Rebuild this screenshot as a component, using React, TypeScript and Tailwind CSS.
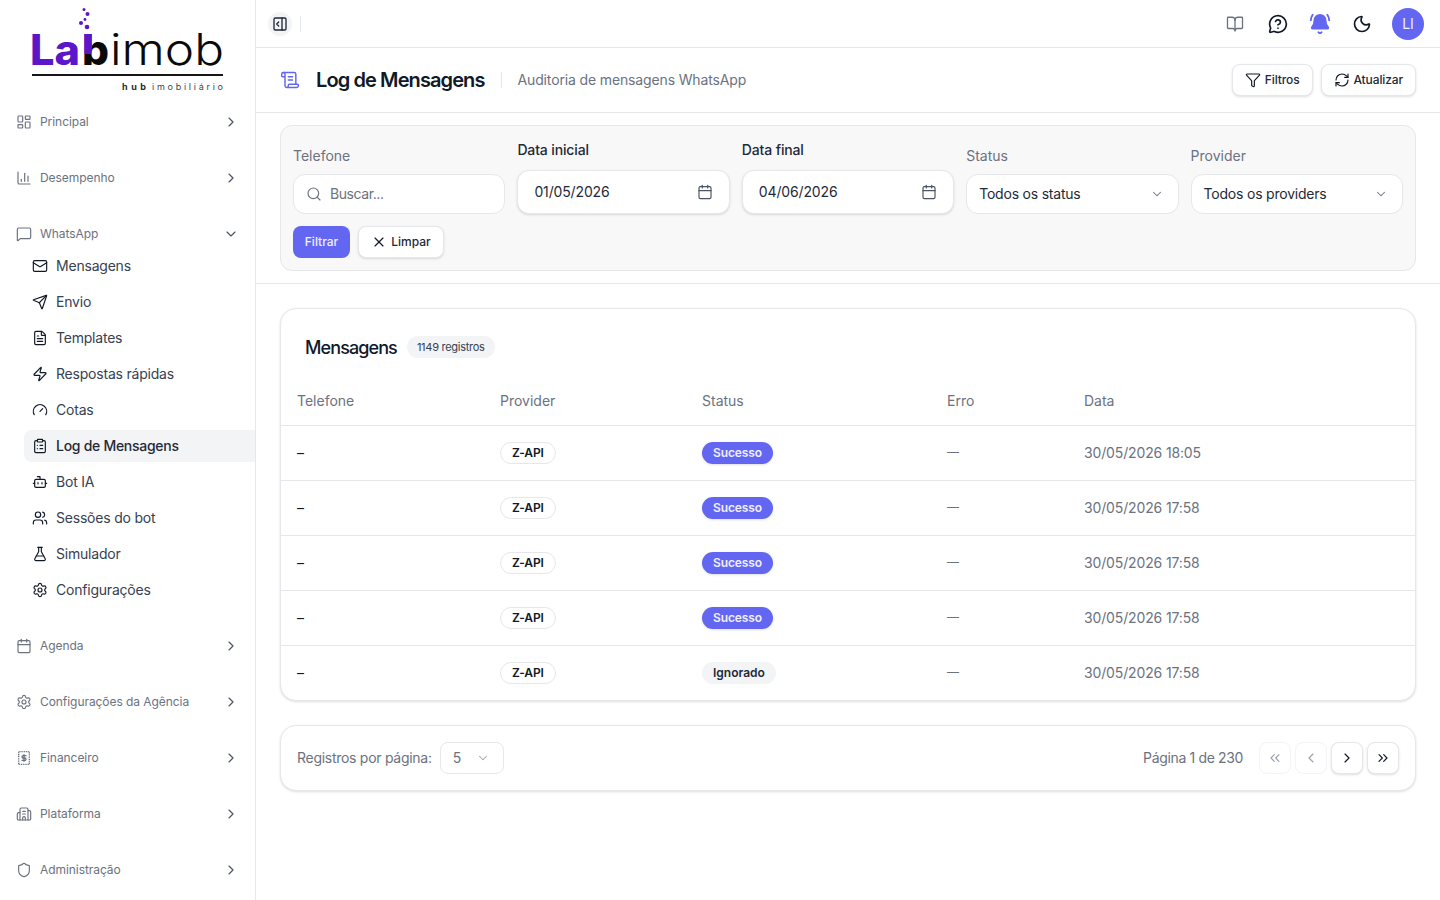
import {
  BellRing,
  BookOpen,
  Bot,
  Building2,
  Calendar,
  ChartColumn,
  ChevronDown,
  ChevronLeft,
  ChevronRight,
  ChevronsLeft,
  ChevronsRight,
  ClipboardList,
  FileText,
  FlaskConical,
  Funnel,
  Gauge,
  LayoutDashboard,
  Mail,
  MessageCircleQuestionMark,
  MessageSquare,
  Moon,
  PanelRightOpen,
  RefreshCw,
  ScrollText,
  Search,
  Send,
  Settings,
  Shield,
  Users,
  X,
  Zap,
} from "lucide-react";
import type { ComponentType, ReactNode } from "react";

type IconType = ComponentType<{ className?: string; strokeWidth?: number }>;

const subItems: { label: string; icon: IconType; active?: boolean }[] = [
  { label: "Mensagens", icon: Mail },
  { label: "Envio", icon: Send },
  { label: "Templates", icon: FileText },
  { label: "Respostas rápidas", icon: Zap },
  { label: "Cotas", icon: Gauge },
  { label: "Log de Mensagens", icon: ClipboardList, active: true },
  { label: "Bot IA", icon: Bot },
  { label: "Sessões do bot", icon: Users },
  { label: "Simulador", icon: FlaskConical },
  { label: "Configurações", icon: Settings },
];

const rows = [
  { status: "Sucesso", date: "30/05/2026 18:05" },
  { status: "Sucesso", date: "30/05/2026 17:58" },
  { status: "Sucesso", date: "30/05/2026 17:58" },
  { status: "Sucesso", date: "30/05/2026 17:58" },
  { status: "Ignorado", date: "30/05/2026 17:58" },
];

function ReceiptIcon({ className }: { className?: string }) {
  return (
    <svg viewBox="0 0 24 24" fill="none" stroke="currentColor" strokeWidth={2} className={className}>
      <rect x="4" y="2.5" width="16" height="19" strokeDasharray="1.6 1.1" />
      <path d="M15 8.5h-4.2a1.75 1.75 0 0 0 0 3.5h2.4a1.75 1.75 0 0 1 0 3.5H9M12 7v10" strokeLinecap="round" />
    </svg>
  );
}

function Logo() {
  return (
    <svg viewBox="0 0 256 94" className="h-[94px] w-[256px] shrink-0">
      <defs>
        <clipPath id="stem">
          <rect x="82" y="30" width="10" height="24" />
        </clipPath>
      </defs>
      <circle cx="84" cy="9.5" r="1.5" fill="#5b16c9" />
      <circle cx="87.5" cy="14" r="2" fill="#5b16c9" />
      <circle cx="85" cy="19.5" r="1.4" fill="#5b16c9" />
      <circle cx="81" cy="23" r="2" fill="#5b16c9" />
      <circle cx="87" cy="27" r="2.3" fill="#5b16c9" />
      <text x="30" y="65" fontFamily="Inter, sans-serif" fontWeight={800} fontSize="42" fill="#5b16c9" textLength="50" lengthAdjust="spacingAndGlyphs">
        La
      </text>
      <text x="82" y="65" fontFamily="Inter, sans-serif" fontWeight={800} fontSize="42" fill="#0a0a0a" textLength="27" lengthAdjust="spacingAndGlyphs">
        b
      </text>
      <g clipPath="url(#stem)" aria-hidden="true">
        <text x="82" y="65" fontFamily="Inter, sans-serif" fontWeight={800} fontSize="42" fill="#5b16c9" textLength="27" lengthAdjust="spacingAndGlyphs">
          b
        </text>
      </g>
      <text x="110" y="65" fontFamily="Inter, sans-serif" fontWeight={300} fontSize="44" fill="#0a0a0a" textLength="114" lengthAdjust="spacingAndGlyphs">
        imob
      </text>
      <rect x="32" y="74" width="191" height="2" fill="#171717" />
      <text x="122" y="90" fontFamily="Inter, sans-serif" fontWeight={700} fontSize="9" fill="#2b2b1f" textLength="24">
        hub
      </text>
      <text x="152" y="90" fontFamily="Inter, sans-serif" fontWeight={400} fontSize="9" fill="#444" textLength="71">
        imobiliário
      </text>
    </svg>
  );
}

function NavGroup({ label, icon: Icon }: { label: string; icon: IconType }) {
  return (
    <div className="py-3">
      <div className="flex h-8 items-center pl-[16px] pr-[16px] text-[#6b7280]">
        <Icon className="mr-2 h-4 w-4 shrink-0" strokeWidth={1.75} />
        <span className="flex-1 text-[12px] tracking-[-0.005em]">{label}</span>
        <ChevronRight className="h-4 w-4 text-[#4b5563]" strokeWidth={1.75} />
      </div>
    </div>
  );
}

function Sidebar() {
  return (
    <aside className="flex h-full w-[256px] shrink-0 flex-col border-r border-[#e5e7eb] bg-white">
      <Logo />
      <nav className="flex flex-col">
        <NavGroup label="Principal" icon={LayoutDashboard} />
        <NavGroup label="Desempenho" icon={ChartColumn} />
        <div className="pb-[10px] pt-3">
          <div className="flex h-8 items-center pl-[16px] pr-[16px] text-[#6b7280]">
            <MessageSquare className="mr-2 h-4 w-4 shrink-0" strokeWidth={1.75} />
            <span className="flex-1 text-[12px] tracking-[-0.005em]">WhatsApp</span>
            <ChevronDown className="h-4 w-4 text-[#4b5563]" strokeWidth={1.75} />
          </div>
          <ul className="ml-6 -mt-0.5 flex flex-col">
            {subItems.map(({ label, icon: Icon, active }) => (
              <li key={label} className="py-0.5">
                <div
                  className={`flex h-8 items-center gap-2 rounded-l-lg pl-2 text-[14px] ${
                    active
                      ? "bg-[#f3f4f6] font-medium tracking-[-0.02em] text-[#1f2937]"
                      : "tracking-[-0.015em] text-[#374151]"
                  }`}
                >
                  <Icon className="h-4 w-4 shrink-0 text-[#111827]" strokeWidth={1.75} />
                  <span className="-mt-0.5">{label}</span>
                </div>
              </li>
            ))}
          </ul>
        </div>
        <NavGroup label="Agenda" icon={Calendar} />
        <NavGroup label="Configurações da Agência" icon={Settings} />
        <NavGroup label="Financeiro" icon={ReceiptIcon as IconType} />
        <NavGroup label="Plataforma" icon={Building2} />
        <NavGroup label="Administração" icon={Shield} />
      </nav>
    </aside>
  );
}

function TopBar() {
  return (
    <header className="flex h-[48px] shrink-0 items-center border-b border-[#e5e7eb] pl-3 pr-4">
      <div className="flex h-6 w-6 items-center justify-center rounded-full bg-[#f3f4f6]">
        <PanelRightOpen className="h-4 w-4 text-[#1f2937]" strokeWidth={2} />
      </div>
      <div className="ml-2 h-4 w-px bg-[#e5e7eb]" />
      <div className="ml-auto flex items-center">
        <span className="flex w-[43px] justify-center">
          <BookOpen className="h-[18px] w-[18px] text-[#6b7280]" strokeWidth={1.75} />
        </span>
        <span className="flex w-[43px] justify-center">
          <MessageCircleQuestionMark className="h-5 w-5 text-[#111827]" strokeWidth={2} />
        </span>
        <span className="flex w-[42px] justify-center">
          <BellRing className="h-[22px] w-[22px] fill-[#6366f1] text-[#6366f1]" strokeWidth={2} />
        </span>
        <span className="flex w-[42px] justify-center">
          <Moon className="h-5 w-5 text-[#111827]" strokeWidth={2} />
        </span>
        <div className="ml-[9px] flex h-8 w-8 items-center justify-center rounded-full bg-[#6366f1] text-[14px] text-white/90">
          LI
        </div>
      </div>
    </header>
  );
}

function ActionButton({ icon: Icon, label }: { icon: IconType; label: string }) {
  return (
    <button className="flex h-8 items-center gap-1 rounded-lg border border-[#e5e7eb] bg-white px-3 text-[12px] font-medium tracking-[-0.01em] text-[#1f2937] shadow-sm">
      <Icon className="h-4 w-4 text-[#111827]" strokeWidth={1.75} />
      {label}
    </button>
  );
}

function PageHeader() {
  return (
    <div className="flex h-[65px] shrink-0 items-center border-b border-[#e5e7eb] pl-6 pr-6">
      <ScrollText className="h-5 w-5 text-[#6366f1]" strokeWidth={1.75} />
      <h1 className="ml-4 text-[20px] font-semibold tracking-[-0.045em] text-[#111827]">Log de Mensagens</h1>
      <div className="ml-4 h-4 w-px bg-[#e5e7eb]" />
      <p className="-mt-0.5 ml-4 text-[14px] tracking-[-0.01em] text-[#6b7280]">Auditoria de mensagens WhatsApp</p>
      <div className="ml-auto flex items-center gap-2">
        <ActionButton icon={Funnel} label="Filtros" />
        <ActionButton icon={RefreshCw} label="Atualizar" />
      </div>
    </div>
  );
}

function Field({ label, strong, children }: { label: string; strong?: boolean; children: ReactNode }) {
  return (
    <div className="flex flex-col justify-end">
      <label
        className={`text-[14px] leading-5 ${strong ? "mb-[10px] font-medium tracking-[-0.01em] text-[#1f2937]" : "mb-2 text-[#6b7280]"}`}
      >
        {label}
      </label>
      {children}
    </div>
  );
}

function DateInput({ value }: { value: string }) {
  return (
    <div className="flex h-[44px] items-center justify-between rounded-xl border border-[#e5e7eb] bg-white pl-4 pr-4 text-[14px] tracking-[-0.01em] text-[#1f2937] shadow-sm">
      <span className="-mt-0.5">{value}</span>
      <Calendar className="h-4 w-4 text-[#4b5563]" strokeWidth={1.75} />
    </div>
  );
}

function SelectBox({ value }: { value: string }) {
  return (
    <div className="flex h-[40px] items-center justify-between rounded-xl border border-[#e5e7eb] bg-white pl-3 pr-[14px] text-[14px] tracking-[-0.015em] text-[#1f2937]">
      <span className="-mt-0.5">{value}</span>
      <ChevronDown className="h-3.5 w-3.5 text-[#6b7280]" strokeWidth={1.75} />
    </div>
  );
}

function Filters() {
  return (
    <section className="shrink-0 border-b border-[#e5e7eb] px-6 py-3">
      <div className="rounded-xl border border-[#e5e7eb] bg-[#f8f8f9] p-3">
        <div className="grid grid-cols-5 gap-3 pt-0.5">
          <Field label="Telefone">
            <div className="flex h-[40px] items-center gap-2 rounded-xl border border-[#e5e7eb] bg-white pl-3 text-[14px] text-[#6b7280]">
              <Search className="h-4 w-4" strokeWidth={1.75} />
              <span className="-mt-0.5 tracking-[-0.03em]">Buscar...</span>
            </div>
          </Field>
          <Field label="Data inicial" strong>
            <DateInput value="01/05/2026" />
          </Field>
          <Field label="Data final" strong>
            <DateInput value="04/06/2026" />
          </Field>
          <Field label="Status">
            <SelectBox value="Todos os status" />
          </Field>
          <Field label="Provider">
            <SelectBox value="Todos os providers" />
          </Field>
        </div>
        <div className="mt-3 flex gap-2">
          <button className="h-8 w-[57px] rounded-lg bg-[#6366f1] text-[12px] font-medium text-white/90">Filtrar</button>
          <button className="flex h-8 w-[86px] items-center justify-center gap-1 rounded-lg border border-[#e5e7eb] bg-white text-[12px] font-medium text-[#1f2937] shadow-sm">
            <X className="h-4 w-4 text-[#111827]" strokeWidth={1.75} />
            Limpar
          </button>
        </div>
      </div>
    </section>
  );
}

const gridCols = "grid grid-cols-[203px_202px_245px_137px_1fr] items-center";

function MessagesTable() {
  return (
    <div className="rounded-2xl border border-[#e5e7eb] bg-white shadow-sm">
      <div className="flex h-[68px] items-center gap-[10px] px-6 pt-2">
        <h2 className="text-[18px] font-medium tracking-[-0.05em] text-[#111827]">Mensagens</h2>
        <span className="flex h-[22px] items-center rounded-full bg-[#f3f4f6] px-[10px] text-[11px] tracking-[-0.025em] text-[#374151]">
          1149 registros
        </span>
      </div>
      <div className={`${gridCols} h-[49px] border-b border-[#e5e7eb] px-4 pb-0.5 text-[14px] text-[#6b7280]`}>
        <span>Telefone</span>
        <span>Provider</span>
        <span>Status</span>
        <span>Erro</span>
        <span>Data</span>
      </div>
      {rows.map((row, i) => (
        <div
          key={i}
          className={`${gridCols} px-4 pb-0.5 text-[14px] ${i < rows.length - 1 ? "h-[55px] border-b border-[#e5e7eb]" : "h-[54px]"}`}
        >
          <span className="text-[#111827]">–</span>
          <span>
            <span className="inline-flex h-[22px] items-center rounded-full border border-[#e5e7eb] px-[11px] text-[12px] font-semibold tracking-[-0.01em] text-[#111827]">
              Z-API
            </span>
          </span>
          <span>
            {row.status === "Sucesso" ? (
              <span className="inline-flex h-[22px] items-center rounded-full bg-[#6366f1] px-[11px] text-[12px] font-semibold tracking-[-0.01em] text-white/90 shadow-sm">
                {row.status}
              </span>
            ) : (
              <span className="inline-flex h-[22px] items-center rounded-full bg-[#f3f4f6] px-[11px] text-[12px] font-semibold text-[#1f2937]">
                {row.status}
              </span>
            )}
          </span>
          <span className="text-[12px] text-[#6b7280]">—</span>
          <span className="tracking-[-0.01em] text-[#6b7280]">{row.date}</span>
        </div>
      ))}
    </div>
  );
}

function PageButton({ icon: Icon, disabled }: { icon: IconType; disabled?: boolean }) {
  return (
    <button
      className={`flex h-8 w-8 items-center justify-center rounded-lg border border-[#e5e7eb] bg-white ${
        disabled ? "border-[#f3f4f6] text-[#9ca3af]" : "text-[#111827] shadow-sm"
      }`}
    >
      <Icon className="h-4 w-4" strokeWidth={1.75} />
    </button>
  );
}

function Pagination() {
  return (
    <div className="mt-6 flex h-[66px] items-center justify-between rounded-2xl border border-[#e5e7eb] bg-white px-4 shadow-sm">
      <div className="flex items-center gap-2 text-[14px] text-[#6b7280]">
        <span className="-mt-0.5 tracking-[-0.02em]">Registros por página:</span>
        <div className="flex h-8 w-[64px] items-center justify-between rounded-lg border border-[#e5e7eb] pl-3 pr-[13px]">
          <span className="-mt-0.5">5</span>
          <ChevronDown className="h-3.5 w-3.5 text-[#9ca3af]" strokeWidth={1.75} />
        </div>
      </div>
      <div className="flex items-center">
        <span className="-mt-0.5 mr-4 text-[14px] tracking-[-0.025em] text-[#6b7280]">Página 1 de 230</span>
        <div className="flex gap-1">
          <PageButton icon={ChevronsLeft} disabled />
          <PageButton icon={ChevronLeft} disabled />
          <PageButton icon={ChevronRight} />
          <PageButton icon={ChevronsRight} />
        </div>
      </div>
    </div>
  );
}

export default function App() {
  return (
    <div className="flex h-[900px] w-full overflow-hidden bg-white font-['Inter',sans-serif]">
      <Sidebar />
      <main className="flex min-w-0 flex-1 flex-col">
        <TopBar />
        <PageHeader />
        <Filters />
        <div className="px-6 pt-6">
          <MessagesTable />
          <Pagination />
        </div>
      </main>
    </div>
  );
}
